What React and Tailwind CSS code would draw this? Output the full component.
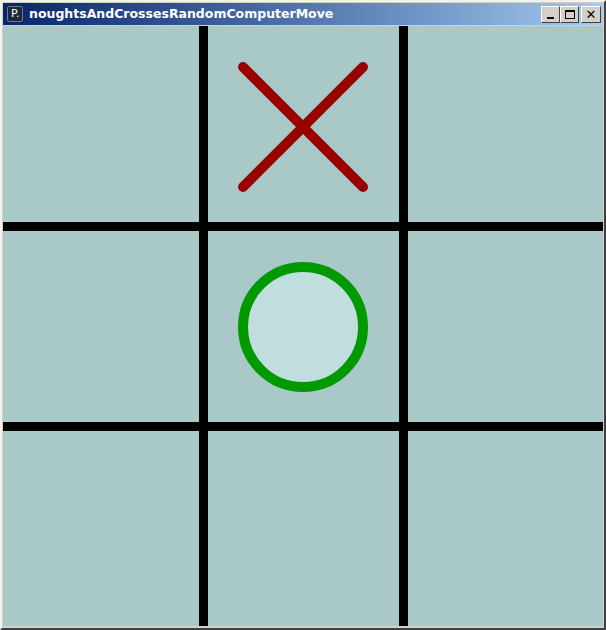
import React from 'react';

const Board = () => (
  <svg width="600" height="600" viewBox="0 0 600 600" className="block">
    <rect x="0" y="0" width="600" height="600" fill="#a9c8c8" />
    {/* grid */}
    <rect x="196" y="0" width="9" height="600" fill="#000" />
    <rect x="396" y="0" width="9" height="600" fill="#000" />
    <rect x="0" y="196" width="600" height="9" fill="#000" />
    <rect x="0" y="396" width="600" height="9" fill="#000" />
    {/* cross */}
    <g stroke="#990000" strokeWidth="10" strokeLinecap="round">
      <line x1="240" y1="41" x2="360" y2="161" />
      <line x1="360" y1="41" x2="240" y2="161" />
    </g>
    {/* nought */}
    <circle cx="300" cy="301" r="60" fill="#c0dede" stroke="#009900" strokeWidth="10" />
  </svg>
);

const TitleButton = ({ children, wide }) => (
  <div
    className={
      wide
        ? 'w-[20px] h-[17px] bg-[#d4d0c8] border border-t-white border-l-white border-r-[#404040] border-b-[#404040] flex items-center justify-center'
        : 'w-[19px] h-[17px] bg-[#d4d0c8] border border-t-white border-l-white border-r-[#404040] border-b-[#404040] flex items-center justify-center'
    }
  >
    {children}
  </div>
);

export default function App() {
  return (
    <div className="w-[606px] h-[630px] bg-[#d4d0c8] border-2 border-t-[#f4f2ee] border-l-[#f4f2ee] border-r-[#404040] border-b-[#404040] flex flex-col overflow-hidden">
      {/* title bar */}
      <div className="mx-px mt-px h-[22px] flex items-center bg-gradient-to-r from-[#0a246a] to-[#a6caf0] pl-[4px] pr-[2px]">
        <div className="w-[16px] h-[16px] bg-[#1b2a3a] border border-[#6a7c8c] rounded-[2px] flex items-end pl-[3px] pb-[1px]">
          <span className="text-white text-[11px] leading-[12px] font-['DejaVu_Sans',sans-serif]">P.</span>
        </div>
        <span className="ml-[6px] text-white font-bold text-[12.5px] font-['DejaVu_Sans',sans-serif] leading-none">
          noughtsAndCrossesRandomComputerMove
        </span>
        <div className="ml-auto flex items-center">
          <TitleButton>
            <div className="w-[7px] h-[2px] bg-black mt-[7px]" />
          </TitleButton>
          <TitleButton>
            <div className="w-[10px] h-[9px] border border-black border-t-2" />
          </TitleButton>
          <div className="w-[2px]" />
          <TitleButton wide>
            <span className="text-black text-[13px] font-bold leading-none font-['DejaVu_Sans',sans-serif]">✕</span>
          </TitleButton>
        </div>
      </div>
      <div className="h-px" />
      <div className="ml-px">
        <Board />
      </div>
    </div>
  );
}
